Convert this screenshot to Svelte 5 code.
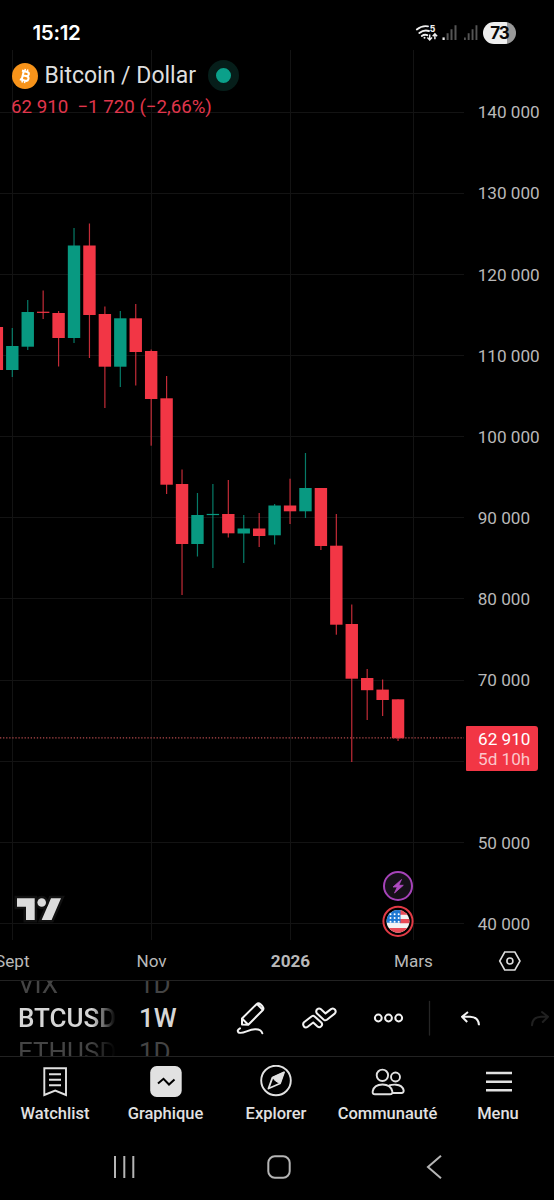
<script>
  const TOP = 50;
  const step = 15.43;
  // [top, bottom, high, low, rising]
  const candles = [
    [327, 370, 327, 370, 0],
    [346, 370, 328, 377, 1],
    [312, 346.7, 300, 350, 1],
    [311.7, 312.9, 290.5, 319, 0],
    [313, 338, 311, 366.5, 0],
    [245.5, 338, 228, 343, 1],
    [245.5, 315, 223.5, 358, 0],
    [314, 366.7, 306.5, 408, 0],
    [318.3, 366.7, 311, 387, 1],
    [318.3, 352, 304, 385.5, 0],
    [351, 399, 349.5, 445.7, 0],
    [398.3, 484.7, 376, 494, 0],
    [484, 544, 469.5, 595, 0],
    [515, 544, 493, 556.5, 1],
    [513.9, 515.1, 484, 568, 1],
    [514, 533.3, 480, 537.5, 0],
    [528.5, 533.5, 515, 563, 1],
    [528.5, 536, 513, 547, 0],
    [505.5, 535.3, 504, 544.5, 1],
    [505.5, 511.3, 478.7, 524, 0],
    [488, 511.3, 453, 518, 1],
    [488, 546, 488, 550, 0],
    [545.7, 624.7, 514, 634.7, 0],
    [624, 678.7, 604.5, 762, 0],
    [678, 690.2, 669, 720, 0],
    [689.6, 700, 679.5, 716, 0],
    [699.3, 738.3, 699.3, 741, 0]
  ].map(([top, bottom, high, low, up], i) => ({
    x: 12.3 + (i - 1) * step,
    top, bottom, high, low, up
  }));

  const rows = Array.from({ length: 11 }, (_, i) => Math.floor(112 + i * 81.15) + 0.5);
  const cols = [12.5, 151.5, 290.5, 413.5];
  const prices = ['140 000', '130 000', '120 000', '110 000', '100 000', '90 000', '80 000', '70 000', '', '50 000', '40 000'];
  const stars = [0, 1, 2].flatMap((r) => [0, 1, 2].map((c) => [390.5 + c * 4.1, 914.2 + r * 3.8]));
</script>

<div class="screen">
  <header class="status">
    <span class="clock">15:12</span>
    <div class="indicators">
      <svg width="64" height="24" viewBox="414 21 64 24">
        <g fill="none" stroke="#eee" stroke-width="1.9" stroke-linecap="round">
          <path d="M416.800 29.500Q422 25.300 428 26.400" />
          <path d="M419.300 33Q424 29.300 429 31" />
          <path d="M421.800 36Q424.500 34 427.300 35.200" />
        </g>
        <circle cx="424.500" cy="37.700" r="1" fill="#eee" />
        <text class="band" x="429.800" y="32.300">5</text>
        <path d="M429.700 34.500v5.300m-2.300-2.200 2.300 2.400 2.300-2.400M434.900 39.200V34m-2.200 2.200 2.200-2.400 2.200 2.400" fill="none" stroke="#eee" stroke-width="1.500" />
        <path d="M442.500 37.400h2.200v2.600h-2.200z" fill="#eee" />
        <path d="M446.600 33.300h2v6.700h-2zM450.500 29.300h2V40h-2zM454.500 25.300h2V40h-2z" fill="#555" />
        <path d="M464 37.400h1.800v2.600H464zM467.700 33.300h1.900v6.700h-1.900zM471.600 29.300h1.900V40h-1.900zM475.500 25.300h1.900V40h-1.900z" fill="#555" />
      </svg>
      <span class="battery">73</span>
    </div>
  </header>

  <main class="chart">
    <div class="main-row">
      <div class="pane">
        <svg class="plot" width="466" height="890" viewBox="0 {TOP} 466 890">
          <g stroke="#131313" stroke-width="1">
            {#each rows as y}<path d="M0 {y}H464" />{/each}
            {#each cols as x}<path d="M{x} 50V940" />{/each}
          </g>
          {#each candles as c}
            <g fill={c.up ? '#089981' : '#f23645'}>
              <rect x={c.x - 0.6} y={c.high} width="1.200" height={c.low - c.high} opacity="0.800" />
              <rect x={c.x - 6.2} y={c.top} width="12.400" height={c.bottom - c.top} />
            </g>
          {/each}
          <path d="M0 737.800H464" stroke="#b34a4c" stroke-width="1.200" stroke-dasharray="1.300 1.770" />

          <circle cx="398" cy="886" r="14" fill="#151018" stroke="#a643b9" stroke-width="2" />
          <path d="M401.500 879.500L393 887h4.300L394.500 893l8.800-7.700h-4.500z" fill="#b04bc2" stroke="#b04bc2" stroke-width=".8" stroke-linejoin="round" />

          <clipPath id="flag"><circle cx="398" cy="921.300" r="11.400" /></clipPath>
          <circle cx="398" cy="921.300" r="14.600" fill="#000" stroke="#e23a45" stroke-width="2" />
          <g clip-path="url(#flag)">
            <path d="M386 909h25v25h-25z" fill="#f3f3f3" />
            <path d="M400 909.500h11v5.200h-11zM400 919h11v4.300h-11zM386 928h25v6h-25z" fill="#e94b57" />
            <path d="M386 909h14.500v13.700H386" fill="#1d78d2" />
            {#each stars as [x, y]}<circle cx={x} cy={y} r="1" fill="#fff" />{/each}
          </g>

          <g fill="#dcdcdc" stroke="#111" stroke-width="5" paint-order="stroke">
            <path d="M17 898.300h17.700V920H26v-13.300h-9zM51 898.300h10L51.600 920h-10z" />
            <circle cx="41.700" cy="902.500" r="4.300" />
          </g>
        </svg>
        <div class="legend">
          <div class="symbol">
            <svg width="26" height="26" viewBox="0 0 26 26">
              <circle cx="13" cy="13" r="13" fill="#f7931a" />
              <g transform="rotate(14 13 13)" fill="none" stroke="#fff" stroke-width="2.100">
                <path d="M8.800 8.500h5.300a2.100 2.100 0 0 1 0 4.300H10.500M10.500 12.800h4.200a2.300 2.300 0 0 1 0 4.700H8.800M10.700 8.500v9" />
                <path d="M11.600 6v2.500M14.200 6v2.500M11.600 17.500V20M14.200 17.500V20" stroke-width="1.500" />
              </g>
            </svg>
            <span class="name">Bitcoin / Dollar</span>
            <span class="market"></span>
          </div>
          <div class="quote">62 910&nbsp; −1 720 (−2,66%)</div>
        </div>
      </div>
      <div class="prices">
        {#each prices as p}<span>{p}</span>{/each}
        <div class="last"><b>62 910</b><i>5d 10h</i></div>
      </div>
    </div>
    <div class="times">
      <span>Sept</span><span>Nov</span><span class="year">2026</span><span>Mars</span>
      <svg width="24" height="22" viewBox="0 0 24 22" fill="none" stroke="#ddd" stroke-width="1.600">
        <path d="M6.700 2h10.200L22 11l-5.100 9H6.700L1.700 11z" /><circle cx="11.900" cy="11" r="3" />
      </svg>
    </div>
  </main>

  <section class="toolbar">
    <div class="wheel tickers"><span>VIX</span><strong>BTCUSD</strong><span>ETHUSD</span></div>
    <div class="wheel frames"><span>1D</span><strong>1W</strong><span>1D</span></div>
    <svg class="tools" width="334" height="74" viewBox="220 981 334 74" fill="none" stroke="#f2f2f2" stroke-width="2" stroke-linejoin="round" stroke-linecap="round">
      <path d="M242 1024.500V1018.500L256.500 1004.200Q258.500 1002.500 260.500 1004.300L262.500 1006.300Q264.300 1008.300 262.700 1010.300L248.300 1024.700ZM242 1018.500L248.300 1024.700M257 1004L263 1010" />
      <path d="M240 1028.300Q236.500 1030.500 238.500 1032.500C243 1034.500 248 1029.500 255 1029.300Q261 1029 262.300 1033.300" />
      <path d="M304 1022.200L311.800 1016.200Q313.200 1015.200 314.600 1016.400L321.300 1022.500Q323 1024.500 321.200 1026.300Q319.300 1028 317.500 1026.400L313.200 1022.500L307.700 1026.800Q305.500 1028.400 303.900 1026.500Q302.300 1024 304 1022.200Z" />
      <path d="M317 1013.600Q315.300 1011.200 317.200 1009.300Q319.100 1007.600 321 1009.300L325.500 1013.400L331 1009.100Q333.300 1007.600 335 1009.600Q336.500 1011.700 334.700 1013.600L326.900 1019.800Q325.300 1020.900 323.800 1019.700Z" />
      <g stroke-width="2"><circle cx="378.300" cy="1018" r="3.400" /><circle cx="388.500" cy="1018" r="3.400" /><circle cx="398.700" cy="1018" r="3.400" /></g>
      <path d="M429.500 1001.500V1035" stroke="#252525" stroke-width="1.300" />
      <path d="M468 1012L462 1016.700L467.200 1022M462.500 1016.700H470Q478.700 1017 479 1025.300" stroke-linecap="butt" />
      <path d="M542 1012L548 1016.700L542.800 1022M547.500 1016.700H541Q532.300 1017 532 1025.300" stroke="#202020" />
    </svg>
  </section>

  <nav class="tabs">
    <div class="tab">
      <svg width="32" height="32" viewBox="39 1065 32 32" fill="none" stroke="#e1e1e1" stroke-width="1.900"><path d="M44.300 1068.300H66V1095L55.200 1090.500L44.300 1095ZM49 1074.300H61M49 1079.800H61M49 1085.300H61" /></svg>
      <span>Watchlist</span>
    </div>
    <div class="tab">
      <svg width="32" height="32" viewBox="150 1065 32 32"><rect x="150.200" y="1066" width="31.500" height="31" rx="6.500" fill="#e1e1e1" /><path d="M158 1083.500L163.500 1078.800L169 1084.500L174.500 1079.500" fill="none" stroke="#000" stroke-width="2" /></svg>
      <span>Graphique</span>
    </div>
    <div class="tab">
      <svg width="32" height="32" viewBox="260 1065 32 32" fill="none" stroke="#e1e1e1" stroke-width="1.900"><circle cx="276" cy="1080.500" r="14.800" /><path d="M284 1072.300L280 1083.500L268.500 1088.500L272.500 1077.500Z" stroke-linejoin="round" /><path d="M284 1072.300L280 1083.500L275.500 1081L272.500 1077.500Z" fill="#e1e1e1" stroke-width="1" /></svg>
      <span>Explorer</span>
    </div>
    <div class="tab">
      <svg width="36" height="32" viewBox="370 1065 36 32" fill="none" stroke="#e1e1e1" stroke-width="1.900"><circle cx="382.400" cy="1075.300" r="5.700" /><circle cx="395.500" cy="1077" r="4.500" /><path d="M375 1094.300Q372.300 1094.300 372.700 1091.300Q374 1084.500 382.500 1084.500Q390.700 1084.500 392.300 1091.300Q392.700 1094.300 390 1094.300ZM389 1085.500Q392 1084.500 396 1084.700Q402.500 1085 403.700 1090.500Q403.700 1093 401.500 1093H392.500" /></svg>
      <span>Communauté</span>
    </div>
    <div class="tab">
      <svg width="32" height="32" viewBox="482 1065 32 32" stroke="#e1e1e1" stroke-width="2.600"><path d="M485 1073H511M485 1081.700H511M485 1090.300H511" /></svg>
      <span>Menu</span>
    </div>
  </nav>

  <footer class="system">
    <svg width="26" height="26" viewBox="0 0 26 26" stroke="#b5b5b5" stroke-width="2"><path d="M4 2v22M13.300 2v22M22.300 2v22" /></svg>
    <svg width="26" height="26" viewBox="0 0 26 26" fill="none" stroke="#b5b5b5" stroke-width="2"><rect x="2.300" y="2.300" width="21.400" height="21.400" rx="6.500" /></svg>
    <svg width="26" height="26" viewBox="0 0 26 26" fill="none" stroke="#b5b5b5" stroke-width="2"><path d="M20 1.800L7 13L20 24.200" /></svg>
  </footer>
</div>

<style>
  :global(body) { background: #000; }
  .screen {
    width: 554px; height: 1200px; overflow: hidden;
    display: flex; flex-direction: column;
    background: #000; color: #b9b9b9;
    font-family: Roboto, sans-serif; font-size: 17.150px;
  }
  svg { display: block; flex: none; }
  .status {
    height: 50px; flex: none; display: flex; justify-content: space-between;
    box-sizing: border-box; padding: 21px 38px 0 32.500px;
  }
  .clock { font: 600 20.500px/24px Inter, sans-serif; color: #fff; letter-spacing: -0.3px; }
  .band { font: 800 8.500px Inter, sans-serif; fill: #eee; }
  .indicators { display: flex; gap: 5px; }
  .battery {
    width: 33px; height: 22px; margin-top: 1px; border-radius: 11px;
    background: linear-gradient(90deg, #eee 73%, #999 73%);
    color: #080808; font: 700 17px/22px Inter, sans-serif; text-align: center; letter-spacing: -1px;
  }
  .chart { height: 930px; flex: none; }
  .main-row { display: flex; height: 890px; }
  .pane { position: relative; width: 466px; }
  .legend { position: absolute; left: 12px; top: 9px; }
  .symbol { display: flex; align-items: center; height: 33px; }
  .name { margin-left: 6.500px; width: 157.500px; font-size: 23px; color: #dedede; white-space: nowrap; }
  .market {
    box-sizing: border-box; width: 31px; height: 31px; margin-left: 6px; border-radius: 50%;
    background: #0ba08a; border: 8px solid #061e1a;
  }
  .quote { margin: 4px 0 0 -1px; font-size: 18.700px; line-height: 22px; color: #e0364c; white-space: nowrap; }
  .prices { position: relative; flex: 1; padding: 22.300px 0 0 11.700px; display: flex; flex-direction: column; }
  .prices span { height: 81.160px; flex: none; line-height: 81.160px; }
  .last {
    position: absolute; left: 0; top: 675.500px; width: 71.500px; height: 45px; border-radius: 1px 3px 3px 1px;
    box-sizing: border-box; padding: 3px 0 0 12px; background: #f23645;
    display: flex; flex-direction: column; line-height: 20px;
  }
  .last b { font-weight: 400; color: #fff; }
  .last i { font-style: normal; color: #fbc6ca; }
  .times { display: grid; grid-template-columns: 82px 139px 139px 107px 87px; height: 40px; align-items: center; }
  .times span { text-align: center; line-height: 42px; }
  .times span:first-child { text-align: left; margin-left: -5px; }
  .times .year { font-weight: 700; }
  .times svg { margin: 0 0 0 31px; }
  .toolbar {
    height: 77px; flex: none; box-sizing: border-box; overflow: hidden;
    border-top: 1.500px solid #222; border-bottom: 1.500px solid #222; display: flex;
  }
  .wheel { display: flex; flex-direction: column; font-size: 26px; white-space: nowrap; overflow: hidden; height: 75px; }
  .wheel span, .wheel strong { flex: none; height: 34px; line-height: 34px; }
  .wheel strong { font-weight: 500; color: #d6d6d6; }
  .wheel span { color: #444; font-size: 26px; }
  .wheel span:first-child { margin-top: -14px; }
  .tickers {
    width: 98px; margin-left: 18px;
    -webkit-mask-image: linear-gradient(90deg, #000 75%, transparent);
    mask-image: linear-gradient(90deg, #000 75%, transparent);
  }
  .frames { width: 81px; margin-left: 23px; }
  .tabs { height: 80px; flex: none; display: grid; grid-template-columns: 110px 111px 110px 113px 108px; padding-top: 8px; box-sizing: border-box; }
  .tab { display: flex; flex-direction: column; align-items: center; gap: 7px; color: #e1e1e1; font-weight: 500; font-size: 16.500px; line-height: 20px; }
  .tab:last-child svg { margin-left: 2px; }
  .system { flex: 1; display: flex; padding: 17px 0 0 111px; gap: 129px; }
</style>
